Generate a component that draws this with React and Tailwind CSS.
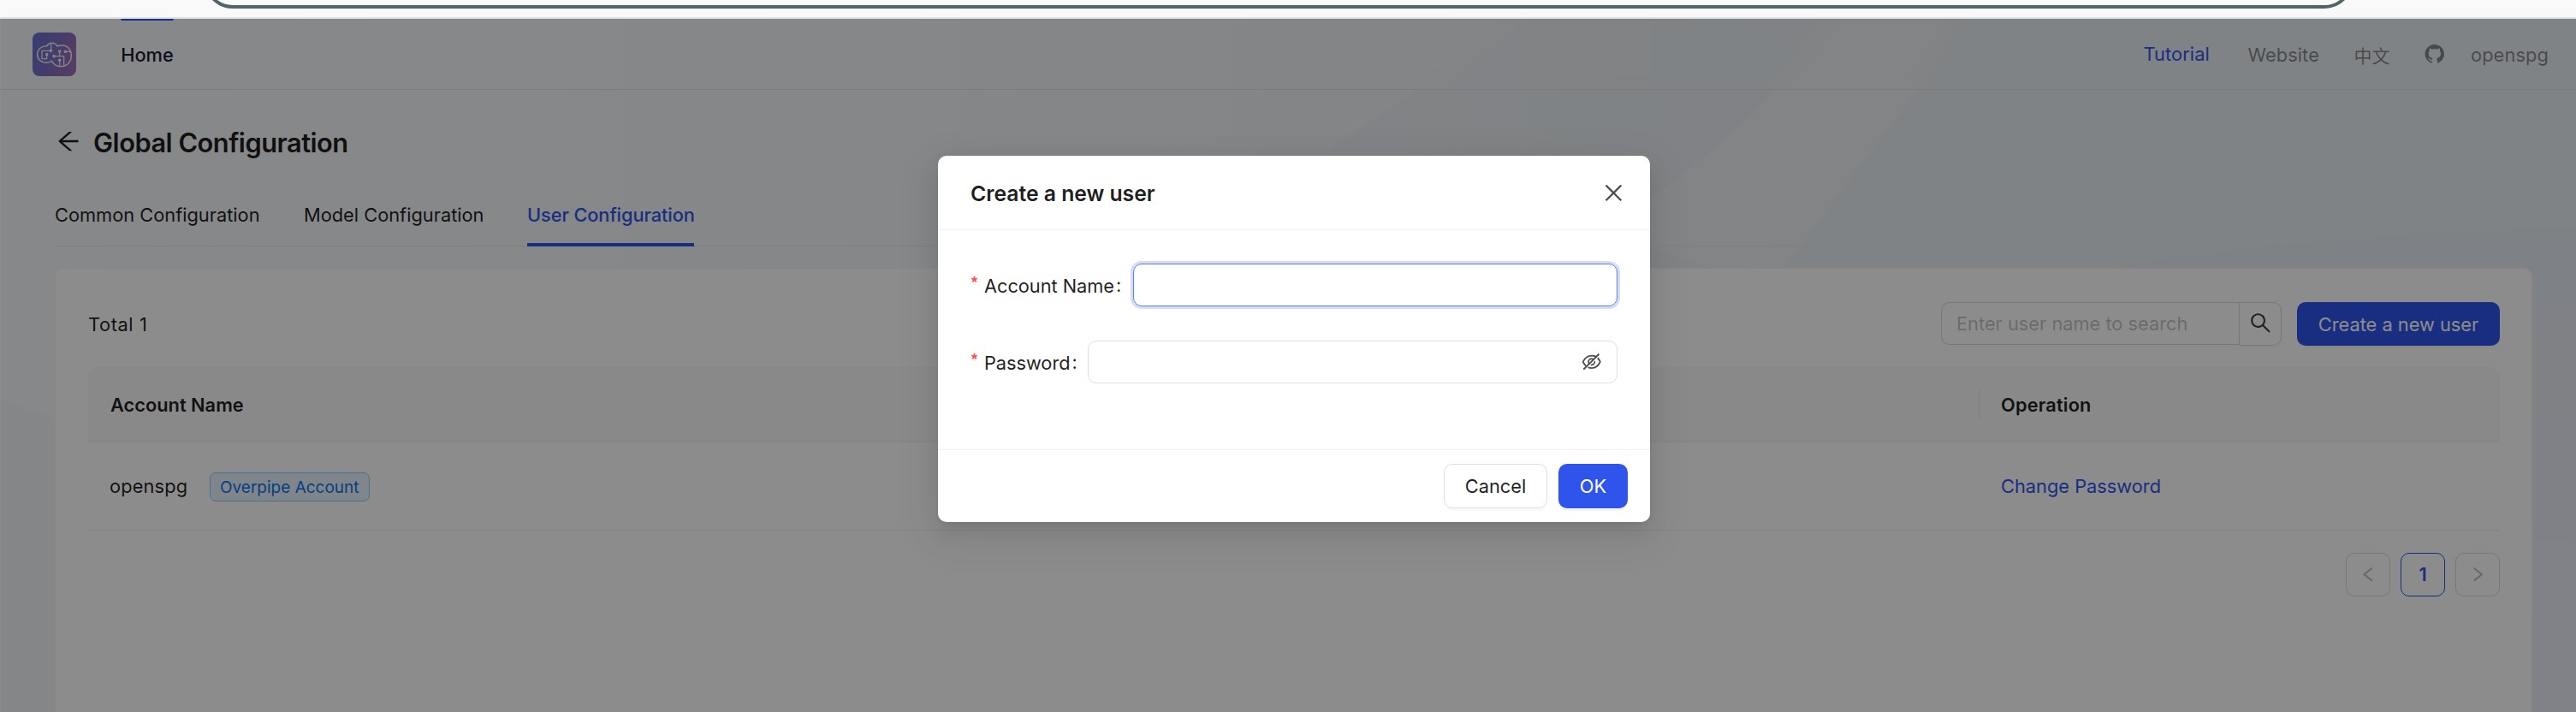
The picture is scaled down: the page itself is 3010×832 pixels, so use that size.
import React from "react";
import {
  AiFillGithub,
  AiOutlineArrowLeft,
  AiOutlineClose,
  AiOutlineEyeInvisible,
  AiOutlineLeft,
  AiOutlineRight,
  AiOutlineSearch,
} from "react-icons/ai";

function BrowserEdge() {
  return (
    <div className="flex h-[22px] shrink-0 items-end overflow-hidden border-b-2 border-[#dfe1e2] bg-[#f9f9f9] pb-[10px] pl-[238px]">
      <div className="h-[68px] w-[2512px] shrink-0 rounded-full border-4 border-[#516467] bg-[#fafafa]" />
    </div>
  );
}

function Backdrop() {
  return (
    <svg className="absolute inset-0" width="3010" height="810" viewBox="0 22 3010 810" preserveAspectRatio="none">
      <defs>
        <linearGradient id="base" x1="0" x2="1" y1="0" y2="0">
          <stop offset="0" stopColor="#f6f7f9" />
          <stop offset="0.35" stopColor="#f4f6f8" />
          <stop offset="0.55" stopColor="#f0f2f5" />
          <stop offset="1" stopColor="#ebeff4" />
        </linearGradient>
        <linearGradient id="shade" x1="0" x2="1" y1="0" y2="0">
          <stop offset="0" stopColor="#ecf0f4" />
          <stop offset="1" stopColor="#e9edf2" />
        </linearGradient>
        <linearGradient id="side" x1="0" x2="0" y1="0" y2="1">
          <stop offset="0" stopColor="#e6ebf2" />
          <stop offset="1" stopColor="#e9edf6" />
        </linearGradient>
        <filter id="soft" x="-20%" y="-20%" width="140%" height="140%">
          <feGaussianBlur stdDeviation="16" />
        </filter>
        <clipPath id="bar">
          <rect x="0" y="22" width="3010" height="83" />
        </clipPath>
      </defs>
      <rect x="0" y="22" width="3010" height="810" fill="url(#base)" />
      <path d="M1657 105 Q1600 140 1544 181 L1460 313 L2000 313 L1870 270 Q1980 205 2074 105 Z" fill="url(#shade)" />
      <path d="M2241 105 Q2160 210 2085 313 L3010 313 L3010 105 Z" fill="#e9eef2" />
      <g clipPath="url(#bar)">
        <path d="M1810 -10 L1640 125 L2060 125 L2170 -10 Z" fill="url(#shade)" filter="url(#soft)" />
        <path d="M2300 -10 L2230 125 L3060 125 L3060 -10 Z" fill="#e9eef2" filter="url(#soft)" />
      </g>
      <path d="M2470 313 Q2760 268 3010 269 L3010 832 L2940 832 L2940 313 Z" fill="url(#side)" />
      <path d="M0 465 Q30 480 66 487 L66 832 L0 832 Z" fill="#f3f4f7" />
      <rect x="0" y="22" width="1" height="810" fill="#ffffff" />
    </svg>
  );
}

function Logo() {
  return (
    <svg className="h-[51px] w-[51px] shrink-0" viewBox="0 0 153 153">
      <defs>
        <linearGradient id="logo" x1="0" x2="1" y1="0.35" y2="0.65">
          <stop offset="0" stopColor="#6a70cc" />
          <stop offset="0.6" stopColor="#846dc0" />
          <stop offset="1" stopColor="#9c72b6" />
        </linearGradient>
      </defs>
      <rect width="153" height="153" rx="24" fill="url(#logo)" />
      <g transform="translate(-114 -114)" fill="none" stroke="#f1eff4" strokeWidth="4.6" strokeLinejoin="round">
        <path d="M165 161 C146 160 131 173 131 191 C131 209 146 220 162 220 C170 220 176 217 181 213 C187 226 200 233 214 233 C235 233 250 216 250 195 C250 173 236 159 217 159 C210 159 206 160 201 162 C196 154 190 151 184 151 C174 151 167 157 165 161 Z" />
        <path d="M179 153 V178 H147 V206 H164 V192" strokeWidth="3.8" />
        <path d="M209 180 V197 M189 197 H224 V230 M209 211 V232 M229 181 H246" strokeWidth="3.8" />
        <g fill="#f1eff4" stroke="none">
          <circle cx="178" cy="178" r="5.4" />
          <circle cx="164" cy="191" r="5.4" />
          <circle cx="209" cy="180" r="5.4" />
          <circle cx="189" cy="197" r="5.4" />
          <circle cx="209" cy="211" r="5.4" />
          <circle cx="229" cy="181" r="5.4" />
        </g>
      </g>
    </svg>
  );
}

function Header() {
  return (
    <header className="flex h-[83px] shrink-0 items-stretch border-b border-[#dde0e3] pl-[38px] pr-[32px]">
      <div className="flex items-center">
        <Logo />
      </div>
      <div className="ml-[52px] flex w-[62px] flex-col items-center">
        <div className="h-[2px] w-full rounded-b-sm bg-[#2f54eb]" />
        <div className="flex flex-1 items-center pt-px font-medium text-[#1a1b2e]">Home</div>
      </div>
      <nav className="ml-auto flex items-center pt-[2px] text-black/45">
        <a className="-mt-[2px] w-[122px] tracking-[0.1px] text-[#2f54eb]">Tutorial</a>
        <a className="w-[124px] tracking-[0.1px]">Website</a>
        <a className="w-[82px] font-['Noto_Sans_CJK_SC',sans-serif] text-[21px]">中文</a>
        <AiFillGithub className="-mt-[2px] h-[25.6px] w-[25.6px]" />
        <a className="ml-[29px] w-[91px] tracking-[0.1px]">openspg</a>
      </nav>
    </header>
  );
}

function Tabs() {
  return (
    <div className="mt-[25px] flex h-[72px] gap-[51px] shadow-[inset_0_-1px_0_#e8eaed]">
      <div className="flex w-[239px] items-center pb-[2px] text-black/88">Common Configuration</div>
      <div className="flex w-[211px] items-center pb-[2px] pl-px text-black/88">Model Configuration</div>
      <div className="flex w-[195px] items-center border-b-4 border-[#2f54eb] pt-[2px] font-medium tracking-[-0.1px] text-[#2f54eb]">
        User Configuration
      </div>
    </div>
  );
}

function Toolbar() {
  return (
    <div className="flex h-[51px] items-start">
      <div className="flex h-full items-center pt-px text-black/88">
        <span className="tracking-[0.6px]">Total&nbsp;1</span>
      </div>
      <div className="ml-auto flex">
        <div className="flex h-[50px] w-[348px] items-center rounded-l-[10px] border border-r-0 border-[#d9d9d9] pl-[17px] text-black/25">
          Enter user name to search
        </div>
        <div className="flex h-[51px] w-[50px] items-center justify-center rounded-r-[10px] border border-[#d9d9d9] shadow-[0_3px_0_rgba(0,0,0,0.02)]">
          <AiOutlineSearch className="mb-[3px] h-[28.8px] w-[28.8px] text-black/75" />
        </div>
        <button className="ml-[18px] flex h-[51px] w-[237px] items-center justify-center rounded-[10px] bg-[#2f54eb] pt-px text-white shadow-[0_3px_0_rgba(0,0,0,0.03)]">
          Create a new user
        </button>
      </div>
    </div>
  );
}

function Table() {
  return (
    <div className="mt-[25px]">
      <div className="grid h-[88px] grid-cols-[2209px_1fr] items-center rounded-t-[10px] border-b border-[#f0f0f0] bg-[#fafafa] font-[560] text-black/88">
        <div className="pl-[26px] pt-[2px]">Account Name</div>
        <div className="flex h-[35px] items-center border-l-2 border-[#f0f0f0] pl-[24px] pt-[2px] tracking-[0.15px]">
          Operation
        </div>
      </div>
      <div className="grid h-[103px] grid-cols-[2209px_1fr] items-center border-b border-[#f0f0f0]">
        <div className="flex items-center pl-[25px] text-black/88">
          <span className="w-[117px] tracking-[0.15px]">openspg</span>
          <span className="mt-[2px] flex h-[34px] items-center rounded-[7px] border border-[#91caff] bg-[#e6f4ff] px-[11px] text-[19px] text-[#1270e8]">
            Overpipe Account
          </span>
        </div>
        <div className="pl-[26px] text-[#2f54eb]">Change Password</div>
      </div>
    </div>
  );
}

function Pagination() {
  return (
    <div className="mt-[26px] flex justify-end gap-[12px]">
      <div className="flex h-[51px] w-[52px] items-center justify-center rounded-[10px] border border-[#d9d9d9] text-black/30">
        <AiOutlineLeft className="h-[22.4px] w-[22.4px]" />
      </div>
      <div className="flex h-[51px] w-[52px] items-center justify-center rounded-[10px] border border-[#2f54eb] font-semibold text-[#2f54eb]">
        1
      </div>
      <div className="flex h-[51px] w-[52px] items-center justify-center rounded-[10px] border border-[#d9d9d9] text-black/30">
        <AiOutlineRight className="h-[22.4px] w-[22.4px]" />
      </div>
    </div>
  );
}

function Label({ children }) {
  return (
    <div className="flex items-center pt-[2px] text-black/88">
      <span className="-mt-[8px] w-[15px] font-['Liberation_Sans',sans-serif] text-[18px] font-bold text-[#ff4d4f]">*</span>
      <span className="tracking-[-0.05px]">{children}</span>
      <span className="-mt-[2px] ml-[2px]">:</span>
    </div>
  );
}

function CreateUserModal() {
  return (
    <div className="absolute inset-0 flex items-start justify-center pl-[14px] pt-[160px]">
      <div className="flex h-[428px] w-[832px] flex-col rounded-[10px] bg-white shadow-[0_10px_26px_rgba(0,0,0,0.08),0_5px_10px_-6px_rgba(0,0,0,0.12),0_14px_45px_13px_rgba(0,0,0,0.05)]">
        <div className="flex h-[87px] items-center justify-between border-b border-[#f0f0f0] pl-[38px] pr-[28px]">
          <h2 className="pt-[2px] text-[24.8px] font-[560] tracking-[-0.05px] text-black/88">Create a new user</h2>
          <AiOutlineClose className="h-[28.8px] w-[28.8px] text-black/70" />
        </div>
        <div className="flex flex-1 flex-col gap-[40px] pl-[39px] pr-[38px] pt-[39px]">
          <div className="flex h-[50px] items-stretch justify-between">
            <Label>Account Name</Label>
            <div className="w-[566px] rounded-[10px] border border-[#597ef7] shadow-[0_0_0_3px_#d5dcfb]" />
          </div>
          <div className="flex h-[50px] items-stretch justify-between">
            <Label>Password</Label>
            <div className="flex w-[619px] items-center justify-end rounded-[10px] border border-[#dfdfdf] pr-[16px]">
              <AiOutlineEyeInvisible className="h-[25.6px] w-[25.6px] text-black/70" />
            </div>
          </div>
        </div>
        <div className="flex h-[85px] items-start justify-end gap-[13px] border-t border-[#f0f0f0] pr-[26px] pt-[16px]">
          <button className="flex h-[52px] w-[121px] items-center justify-center rounded-[10px] border border-[#dfdfdf] text-black/88 shadow-[0_3px_0_rgba(0,0,0,0.02)]">
            Cancel
          </button>
          <button className="flex h-[52px] w-[81px] items-center justify-center rounded-[10px] bg-[#2f54eb] text-white shadow-[0_3px_0_rgba(0,0,0,0.045)]">
            OK
          </button>
        </div>
      </div>
    </div>
  );
}

export default function App() {
  return (
    <div className="flex h-[832px] w-[3010px] flex-col overflow-hidden whitespace-nowrap font-['Inter','Noto_Sans_CJK_SC',sans-serif] text-[21.8px] leading-[35px]">
      <BrowserEdge />
      <div className="relative h-[810px] overflow-hidden">
        <Backdrop />
        <div className="relative flex h-full flex-col">
          <Header />
          <main className="flex flex-1 flex-col pl-[64px] pr-[51px] pt-[36px]">
            <div className="flex h-[50px] items-center gap-[13px] text-black/88">
              <AiOutlineArrowLeft className="mb-[2px] h-[32px] w-[32px]" />
              <h1 className="text-[30.8px] font-[560] tracking-[-0.5px]">Global Configuration</h1>
            </div>
            <Tabs />
            <section className="mt-[25px] flex-1 rounded-t-[10px] border border-b-0 border-[#f5f5f6] bg-white pl-[38px] pr-[37px] pt-[39px]">
              <Toolbar />
              <Table />
              <Pagination />
            </section>
          </main>
        </div>
        <div className="absolute inset-0 bg-black/45" />
        <CreateUserModal />
      </div>
    </div>
  );
}
